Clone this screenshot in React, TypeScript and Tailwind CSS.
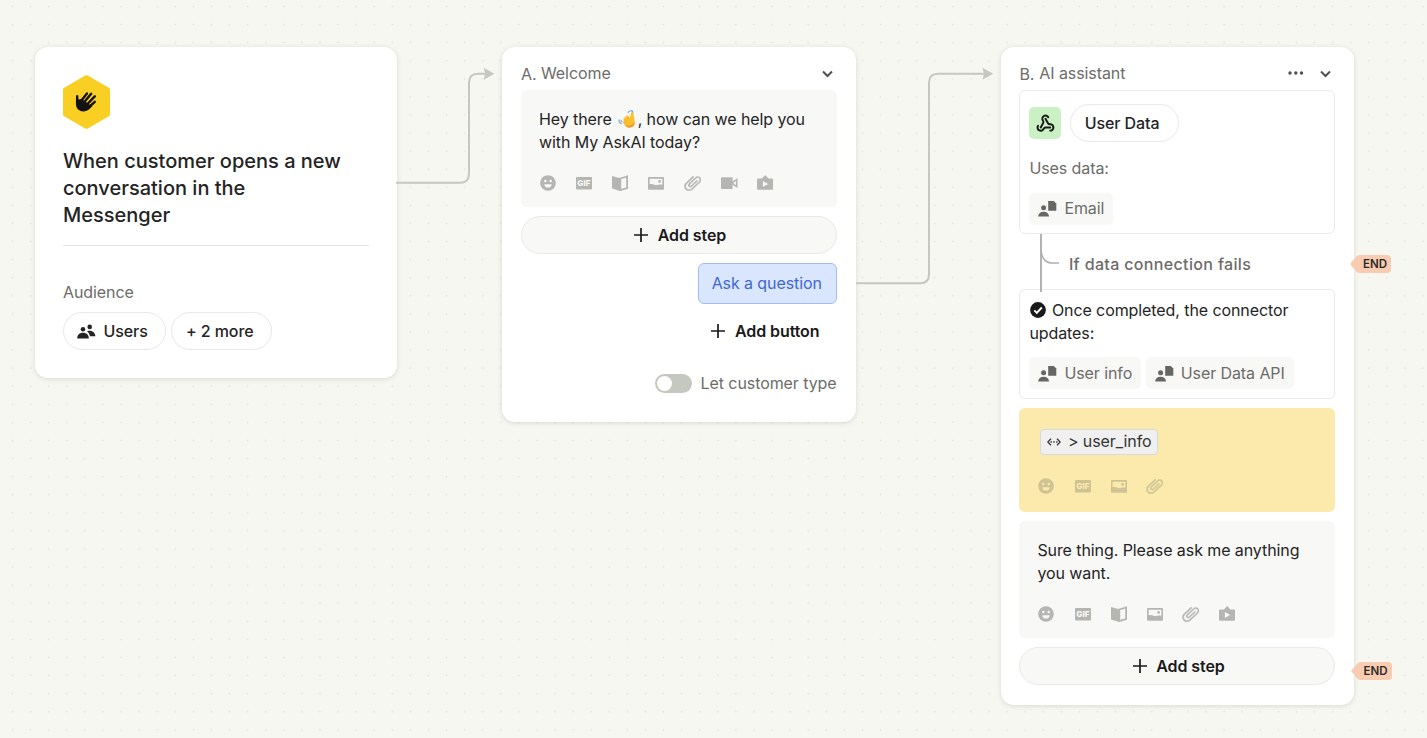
import type { ReactNode } from 'react'
import { Webhook } from 'lucide-react'

function Smile() {
  return (
    <svg viewBox="0 0 16 16" className="size-4">
      <circle cx="8" cy="8" r="7.8" fill="currentColor" />
      <g fill="var(--hole)">
        <circle cx="5.3" cy="6" r="1.25" />
        <circle cx="10.7" cy="6" r="1.25" />
        <path d="M4.300 9.200h7.400c0 2-1.600 3.400-3.700 3.400S4.300 11.200 4.300 9.200z" />
      </g>
    </svg>
  )
}
function Gif() {
  return (
    <svg viewBox="0 0 16 16" className="size-4">
      <rect x="0" y="2" width="16" height="12.600" rx="0.8" fill="currentColor" />
      <text x="8" y="11.300" textAnchor="middle" fontSize="8.200" fontWeight="800" fill="var(--hole)" className="font-[Inter] tracking-normal">
        GIF
      </text>
    </svg>
  )
}
function Book() {
  return (
    <svg viewBox="0 0 16 16" className="size-4">
      <path d="M0 .9 8 3.200V16l-8-2.500z" fill="currentColor" />
      <path d="M8.300 3.500 15.100 1.500v11.600L8.300 15.100z" fill="none" stroke="currentColor" strokeWidth="1.800" />
    </svg>
  )
}
function Picture() {
  return (
    <svg viewBox="0 0 16 16" className="size-4">
      <rect x="0" y="2" width="16" height="12.800" rx="0.8" fill="currentColor" />
      <path d="M1.600 3.700h12.800v6.100c-3-.8-3.700-.3-5.500.3C6.800 10.800 5.500 8.300 1.600 9.200z" fill="var(--hole)" />
      <circle cx="11.600" cy="6.400" r="1.350" fill="currentColor" />
    </svg>
  )
}
function Clip() {
  return (
    <svg viewBox="0 0 17 16" className="-ml-px h-4 w-[17px]" fill="currentColor" stroke="currentColor" strokeWidth="0.5">
      <path
        transform="translate(8.500 8) rotate(47) scale(-0.85 0.85) translate(-12.500 -12)"
        d="M16.500 6v11.500c0 2.210-1.790 4-4 4s-4-1.790-4-4V5a2.500 2.500 0 0 1 5 0v10.500c0 .55-.45 1-1 1s-1-.45-1-1V6H10v9.500a2.500 2.500 0 0 0 5 0V5c0-2.210-1.790-4-4-4S7 2.790 7 5v12.500c0 3.040 2.460 5.500 5.500 5.500s5.500-2.460 5.500-5.500V6h-1.500z"
      />
    </svg>
  )
}
function Video() {
  return (
    <svg viewBox="0 0 17 16" className="h-4 w-[17px]" fill="currentColor">
      <rect x="0" y="2.300" width="11.600" height="11.700" rx="0.9" />
      <path fillRule="evenodd" d="M11 6.800 16.500 3v10L11 9.400zM12.600 7.600v1l2.300 1.600V6z" />
    </svg>
  )
}
function Play() {
  return (
    <svg viewBox="0 0 16 16" className="size-4">
      <path d="M5 3.500 8.200 0l3.200 3.500H15q1 0 1 1v9.500q0 .8-1 .8H1q-1 0-1-.8V4.500q0-1 1-1z" fill="currentColor" />
      <path d="M5.900 5.900v6.200l5.200-3.100z" fill="var(--hole)" />
    </svg>
  )
}
function Plus() {
  return (
    <svg viewBox="0 0 14 14" className="size-3.5" stroke="currentColor" strokeWidth="1.700">
      <path d="M7 0v14M0 7h14" />
    </svg>
  )
}
function Chevron() {
  return (
    <svg viewBox="0 0 11 8" className="h-2 w-[11px]" fill="none" stroke="currentColor" strokeWidth="2">
      <path d="M1 1.500 5.500 6 10 1.500" />
    </svg>
  )
}
function People() {
  return (
    <svg viewBox="0 0 19 15" className="h-[15px] w-[19px]" fill="currentColor">
      <circle cx="6" cy="5.200" r="2.300" />
      <path d="M.2 14.400c0-3.500 2.300-5.600 5.800-5.600s5.800 2.100 5.800 5.600z" />
      <circle cx="12.700" cy="2.900" r="2.300" />
      <path d="M10 7.200c4.800-1.600 8.200 1.200 8.400 5h-5.500c-.3-2.200-1.200-3.800-2.900-5z" />
    </svg>
  )
}
function PersonDoc() {
  return (
    <svg viewBox="0 0 19 17" className="h-[17px] w-[19px] text-[#666663]" fill="currentColor">
      <circle cx="5.600" cy="7.800" r="2.500" />
      <path d="M.1 16.400c.3-3 2.400-4.700 5.500-4.700s5.200 1.700 5.500 4.700z" />
      <path d="M10.200.9h5.600l2.500 2.500v7.400h-8.100z" />
    </svg>
  )
}
function Wave() {
  return (
    <svg viewBox="0 0 18 18" className="mr-[2px] ml-[1.500px] inline-block size-[18px] align-[-3px]">
      <path d="M13 3.400c.1-1.400 2.300-1.400 2.400.2l1.200 6.900c.8 4.200-1.600 7-4.900 7-2.300 0-3.700-1-5-2.600l-1.600-2.100c-.7-1 .2-1.900 1-1.400l-.6-1.100c-.6-1 .4-1.900 1.300-1.300l-.3-.7c-.5-1.200.9-1.900 1.700-1.100l.1-.5C8 5.600 9.300 5 10.200 5.900l1.700 1.500z" fill="#fcc02e" />
      <path d="M16.700 12c.4 3.400-2 5.500-5 5.500-2.300 0-3.700-1-5-2.600 4.500 1.700 7.800.5 10-2.900z" fill="#f0992b" />
      <path d="m6.300 11.500 1.600 1.500M6.800 9l2 2M8.400 6.900l1.900 2" stroke="#ef9f2b" strokeWidth="0.5" />
      <path d="M.9 9.500c0 2.300.8 3.700 2.600 4.600M3 9.700c.1 1.200.5 2 1.300 2.600M10 2.800c.3-1 1-1.700 2.100-1.800M12.300.6c1.500-.1 2.600.8 3 2.100" fill="none" stroke="#6fa3d8" strokeWidth="1.100" />
    </svg>
  )
}

const icons = { smile: Smile, gif: Gif, book: Book, picture: Picture, clip: Clip, video: Video, play: Play }
function IconRow({ names }: { names: (keyof typeof icons)[] }) {
  return (
    <div className="flex gap-[20.170px]">
      {names.map((name) => {
        const Icon = icons[name]
        return (
          <span key={name} className="flex h-4 w-4 *:shrink-0">
            <Icon />
          </span>
        )
      })}
    </div>
  )
}

function Chip({ children }: { children: ReactNode }) {
  return (
    <span className="flex h-8 items-center gap-[7px] rounded-[5px] bg-[#f8f8f7] pr-[9px] pl-[9px] text-[#6c6c69]">
      <PersonDoc />
      {children}
    </span>
  )
}
function AddStep() {
  return (
    <button className="flex h-[38px] shrink-0 items-center justify-center gap-[9.500px] rounded-full border border-[#e9e9e7] bg-[#f8f8f7] pl-[3px] font-semibold text-[#1a1a1a]">
      <Plus />
      Add step
    </button>
  )
}
function End({ place }: { place: string }) {
  return (
    <div className={`absolute flex h-[18px] w-[41px] items-center ${place}`}>
      <svg viewBox="0 0 41 18" className="absolute inset-0 h-full w-full">
        <path d="M.6 8.200 6.400 1.500Q7.800 0 9.500 0H37q4 0 4 4v10q0 4-4 4H9.500q-1.700 0-3.100-1.500L.6 9.800Q0 9 .6 8.200z" fill="#f9cbb1" />
      </svg>
      <span className="relative pl-[13px] text-[11.500px] font-semibold tracking-normal text-[#2c2a28]">END</span>
    </div>
  )
}

const card = 'absolute flex flex-col rounded-[13px] bg-white shadow-[0_1px_5px_rgba(60,60,40,0.16)]'

export default function App() {
  return (
    <main className="relative h-[738px] w-[1427px] overflow-hidden bg-[#f6f7f1] font-[Inter,sans-serif] text-[16px] leading-[22.600px] tracking-[-0.085px] text-[#242424]">
      <svg className="absolute inset-0 h-full w-full">
        <defs>
          <pattern id="dots" x="21.600" y="33.600" width="18.083" height="18.083" patternUnits="userSpaceOnUse">
            <circle cx="9.040" cy="9.040" r="0.9" fill="#e3e4de" />
          </pattern>
        </defs>
        <rect width="100%" height="100%" fill="url(#dots)" />
      </svg>

      <section className={`${card} top-[47px] left-[35px] h-[331px] w-[362px] px-[28px] pt-[28px]`}>
        <svg viewBox="0 0 47 54" className="h-[54px] w-[47px] shrink-0">
          <path d="M22.200.6q1.300-.7 2.600 0l21 12.200q1.200.7 1.200 2v24.400q0 1.300-1.200 2l-21 12.200q-1.300.7-2.600 0l-21-12.200Q0 40.500 0 39.200V14.800q0-1.300 1.200-2z" fill="#f9cf24" />
          <g stroke="#121212" strokeWidth="2.400" strokeLinecap="round" fill="none">
            <path d="M14.200 21.200V29M18 26l6-7.500M20.500 28l7.700-9.200M23.500 30l8.300-8.700M26 32l5.800-5.200" />
          </g>
          <path d="M12.950 23.500 16.500 24.500 18.500 24l8 5.500 2.800 1.700-2.800 2.800c-5 4.500-13.550 2.500-13.550-5z" fill="#121212" />
        </svg>
        <h1 className="mt-[19.300px] w-[290px] text-[20px] leading-[27.100px] font-medium tracking-normal">When customer opens a new conversation in the Messenger</h1>
        <hr className="mt-[15.700px] border-[#e6e6e4]" />
        <p className="mt-[35px] text-[#6c6c69]">Audience</p>
        <div className="mt-[8.500px] flex gap-[5px] font-medium">
          <span className="flex h-[38px] w-[103px] items-center gap-[7.500px] rounded-full border border-[#e9e9e7] pl-[13px]">
            <People />
            Users
          </span>
          <span className="flex h-[38px] w-[101px] items-center rounded-full border border-[#e9e9e7] pl-[14px]">+ 2 more</span>
        </div>
      </section>

      <section className={`${card} top-[47px] left-[502px] h-[375px] w-[353.500px] px-[19px]`}>
        <header className="flex h-[43px] items-start pt-[15px] text-[#6c6c69]">
          <span className="mt-px mr-[4.500px]">A.</span>
          Welcome
          <span className="mt-[8px] mr-[4px] ml-auto text-[#50504e]"><Chevron /></span>
        </header>
        <div className="h-[117px] shrink-0 rounded-[6px] bg-[#f8f8f7] pt-[18px] pl-[18px] [--hole:#f8f8f7]">
          <p className="whitespace-nowrap">Hey there <Wave />, how can we help you<br />with My AskAI today?</p>
          <div className="mt-[22px] pl-px text-[#b5b5b2]">
            <IconRow names={['smile', 'gif', 'book', 'picture', 'clip', 'video', 'play']} />
          </div>
        </div>
        <div className="mt-[9px] flex flex-col"><AddStep /></div>
        <button className="mt-[9px] flex h-[41px] w-[138.500px] items-center justify-center self-end rounded-[6px] border border-[#a0bdf8] bg-[#dae6fe] pr-px pb-px text-[#3f69cc]">Ask a question</button>
        <button className="mt-[15.700px] mr-[17px] flex items-center gap-[9.500px] self-end font-semibold text-[#1a1a1a]"><Plus />Add button</button>
        <label className="mt-[30px] flex items-center gap-[9px] self-end text-[#6c6c69]">
          <span className="flex h-[18.500px] w-[36.500px] items-center rounded-full bg-[#c5c8bf] px-[2px]">
            <span className="size-[14.500px] rounded-full bg-white" />
          </span>
          Let customer type
        </label>
      </section>

      <section className={`${card} top-[47px] left-[1001px] h-[658px] w-[353px] pr-[19px] pl-[18.400px]`}>
        <header className="flex h-[43px] shrink-0 items-start pt-[15px] text-[#6c6c69]">
          <span className="mt-px mr-[5px]">B.</span>
          AI assistant
          <svg viewBox="0 0 16 4" className="mt-[9px] mr-[16px] ml-auto h-1 w-4" fill="#50504e">
            <circle cx="2" cy="2" r="1.700" /><circle cx="7.800" cy="2" r="1.700" /><circle cx="13.500" cy="2" r="1.700" />
          </svg>
          <span className="mt-[8px] mr-[4px] text-[#50504e]"><Chevron /></span>
        </header>
        <div className="flex h-[144.400px] shrink-0 flex-col items-start rounded-[6px] border border-[#ebebe9] px-[9px] pt-[13px]">
          <div className="flex items-center gap-[9px]">
            <span className="flex size-8 items-center justify-center rounded-[5px] bg-[#caf1c4] text-[#1a1a1a]"><Webhook size={19} strokeWidth={2.500} /></span>
            <span className="flex h-[38px] w-[108.500px] items-center justify-center rounded-full border border-[#e9e9e7] pr-[5px] font-medium">User Data</span>
          </div>
          <p className="mt-[15px] text-[#6c6c69]">Uses data:</p>
          <div className="mt-[13px]"><Chip>Email</Chip></div>
        </div>
        <div className="relative flex h-[54.600px] shrink-0 items-center pt-[5px] pl-[49.500px] font-medium tracking-[0.350px] text-[#6c6c69]">
          <svg viewBox="0 0 20 58" className="absolute top-0 left-[20.600px] z-10 h-[58px] w-5" fill="none" stroke="#b0b0ae">
            <path d="M1 0v58" strokeWidth="1.900" />
            <path d="M1.200 16C1.200 24 6 29 11 29h8" strokeWidth="1.500" />
          </svg>
          If data connection fails
        </div>
        <div className="h-[110px] shrink-0 rounded-[6px] border border-[#ebebe9] px-[9px] pt-[9px]">
          <p>
            <svg viewBox="0 0 16 16" className="mr-[6px] ml-[0.500px] inline-block size-4 align-[-2.500px]">
              <circle cx="8" cy="8" r="7.900" fill="#1a1a1a" />
              <path d="m4.300 8.300 2.500 2.500 5-5.300" fill="none" stroke="#fff" strokeWidth="1.900" />
            </svg>
            Once completed, the connector updates:
          </p>
          <div className="mt-[13px] flex gap-[4.500px] whitespace-nowrap"><Chip>User info</Chip><Chip>User Data API</Chip></div>
        </div>
        <div className="mt-[9px] h-[104px] shrink-0 rounded-[6px] bg-[#fbeaac] pt-[21px] pl-[19px] text-[#cfc394] [--hole:#fbeaac]">
          <span className="ml-[2px] flex h-[26px] w-[118px] items-center rounded-[4px] border border-[#d8d9de] bg-[#f0f0f0] pb-px pl-[6px] whitespace-nowrap text-[#343434]">
            <svg viewBox="0 0 14 8" className="mt-px mr-[6.500px] h-2 w-3.5 shrink-0" fill="none" stroke="currentColor" strokeWidth="1.300">
              <path d="M4 .8.8 4 4 7.200M10 .8 13.200 4 10 7.200M3.500 4h1.400M6.300 4h1.400M9.100 4h1.400" />
            </svg>
            &gt; user_info
          </span>
          <div className="mt-[23.500px]"><IconRow names={['smile', 'gif', 'picture', 'clip']} /></div>
        </div>
        <div className="mt-[9px] h-[117px] shrink-0 rounded-[6px] bg-[#f8f8f7] pt-[18px] pl-[18px] [--hole:#f8f8f7]">
          <p className="w-[280px]">Sure thing. Please ask me anything you want.</p>
          <div className="mt-[22px] pl-px text-[#b5b5b2]"><IconRow names={['smile', 'gif', 'book', 'picture', 'clip', 'play']} /></div>
        </div>
        <div className="mt-[9.500px] flex flex-col"><AddStep /></div>
      </section>

      <svg viewBox="0 0 1427 738" className="pointer-events-none absolute inset-0 h-full w-full" fill="none" stroke="#c5c8bf" strokeWidth="2">
        <path d="M396 182.800h64q9 0 9-9V82.700q0-9 9-9h8M856 283.200h64q9 0 9-9V82.700q0-9 9-9h47" />
        <g fill="#c5c8bf" stroke="none">
          <path d="m483.700 67.700 10.700 6-10.700 6 1.500-6z" />
          <path d="m982.500 67.700 10.700 6-10.700 6 1.500-6z" />
        </g>
      </svg>
      <End place="top-[255px] left-[1350px]" />
      <End place="top-[662px] left-[1350.500px]" />
    </main>
  )
}
